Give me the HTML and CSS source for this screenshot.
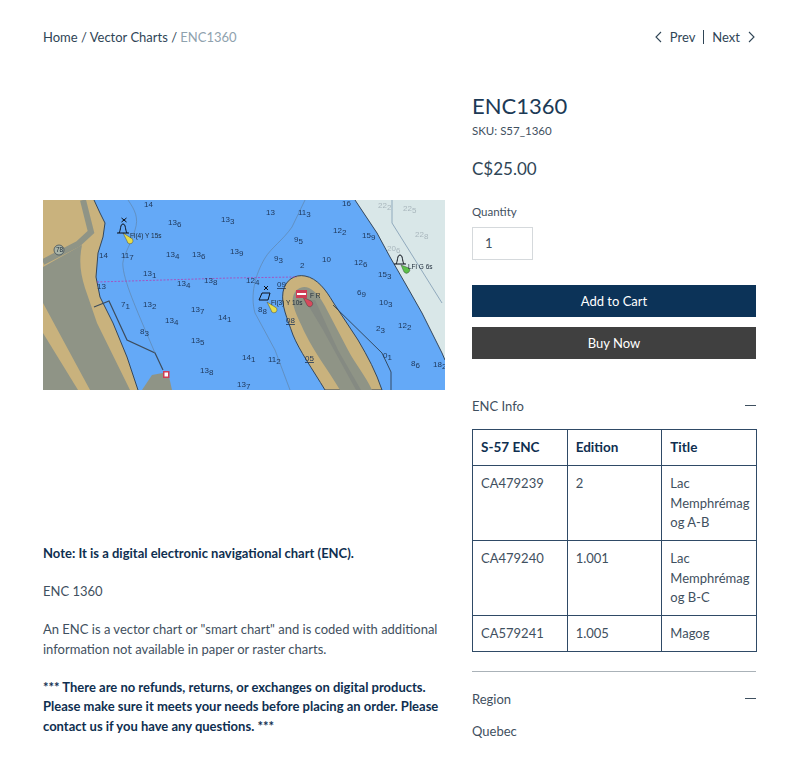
FILE: index.html
```html
<!DOCTYPE html>
<html lang="en">
<head>
    <meta charset="UTF-8">
    <meta name="viewport" content="width=device-width, initial-scale=1.0">
    <title>ENC1360</title>
    <link rel="stylesheet" href="styles.css">
</head>
<body>
    <div class="product">
        <div class="product__top">
            <div class="crumbs">Home / Vector Charts / <span class="crumbs__current">ENC1360</span></div>
            <div class="pager">
                <svg class="pager__icon" viewBox="0 0 8 12"><path d="M7 1 2 6l5 5"/></svg>
                <span>Prev</span>
                <span class="pager__sep"></span>
                <span>Next</span>
                <svg class="pager__icon" viewBox="0 0 8 12"><path d="m1 1 5 5-5 5"/></svg>
            </div>
        </div>

        <div class="product__main">
            <div class="product__left">
                <div class="gallery">
                    <svg class="chart" viewBox="0 0 402 190">
                        <rect class="chart__water" width="402" height="190"/>
                        <path class="chart__light" d="M312 0 334 33 347 57 362 83 379 113 399 153 402 160V0Z"/>
                        <path class="chart__land" d="M0 0H51L57 13 62 23 60 37 55 53 53 77 57 97 70 123 84 157 95 190H0Z"/>
                        <path class="chart__grey" d="M0 67 39 45C36 60 37 72 42 88L54 123 87 190H47L0 103Z"/>
                        <path class="chart__grey" d="M0 133 35 190H0Z"/>
                        <path class="chart__road" d="M0 62 35 44 48 32 40 0"/>
                        <path class="chart__coast" d="M51 0 57 13 62 23 60 37 55 53 53 77 57 97 70 123 84 157 95 190"/>
                        <path class="chart__grey" d="M99 190 109 175 125 172 129 190Z"/>
                        <path class="chart__pier" d="M51 107 66 101 84 140 112 153 120 170"/>
                        <path class="chart__land chart__coast" d="M282 190C270 170 256 150 250 135 244 118 238 105 240 92 242 80 252 74 262 76 274 78 283 90 290 102L315 140C325 157 333 172 339 190Z"/>
                        <path class="chart__grey" d="M297 190C285 170 270 150 263 135 256 120 248 105 250 97 252 88 260 85 266 88 274 92 279 100 284 110L305 150C313 165 322 175 329 190Z"/>
                        <path class="chart__greydark" d="M313 190 280 130 262 100 272 100 295 150 318 190Z"/>
                        <path class="chart__coast" d="M312 0 334 33 347 57 362 83 379 113 399 153 402 160"/>
                        <path class="chart__contour" d="M85 0C92 10 96 18 92 30 88 45 78 58 80 67 82 85 96 115 112 153"/>
                        <path class="chart__contour" d="M262 0 249 27C240 40 228 48 222 58 212 75 207 95 212 113L232 150 247 190"/>
                        <path class="chart__contour chart__contour_dark" d="M290 105 339 153 348 172V190"/>
                        <path class="chart__contour" d="M349 0 349 23 399 103"/>
                        <path class="chart__route" d="M54 82 187 78 254 77"/>

                        <circle class="chart__spot" cx="16" cy="50" r="5"/>
                        <path class="chart__buoy chart__buoy_yellow" d="M80 33 88 38A3 3 0 1 1 84 41Z"/>
                        <path class="chart__mark" d="M74 33H86M76 33C78 30 77 24 80 24 83 24 82 30 84 33M78.5 18l5 4m0-4-5 4"/>
                        <path class="chart__buoy chart__buoy_green" d="M358 65 366 68A3.2 3.2 0 1 1 361 72Z"/>
                        <path class="chart__mark" d="M351 64H363M353 64C355 61 354 55 357 55 360 55 359 61 361 64"/>
                        <path class="chart__buoy chart__buoy_yellow" d="M224 102 232 107A3 3 0 1 1 228 110Z"/>
                        <path class="chart__mark" d="M216 100 219 93H227L225 100ZM221 86l4 4m0-4-4 4"/>
                        <path class="chart__buoy chart__buoy_red" d="M260 97 268 101A3 3 0 1 1 264 105Z"/>
                        <rect class="chart__red" x="253" y="90" width="11" height="8"/>
                        <rect class="chart__white" x="254" y="93" width="9" height="2"/>
                        <rect class="chart__red" x="120" y="171" width="6.5" height="7"/>
                        <rect class="chart__white" x="121.5" y="172.5" width="3.5" height="4"/>

                        <text class="chart__label" x="87" y="38">Fl(4) Y 15s</text>
                        <text class="chart__label" x="365" y="69">LFl G 6s</text>
                        <text class="chart__label" x="228" y="105">Fl(3) Y 10s</text>
                        <text class="chart__label" x="267" y="98">F R</text>
                        <text class="chart__label" x="13" y="52">78</text>

                        <text class="chart__depth" x="101" y="7">14</text>
                        <text class="chart__depth" x="125" y="25">13<tspan dy="2">6</tspan></text>
                        <text class="chart__depth" x="178" y="22">13<tspan dy="2">3</tspan></text>
                        <text class="chart__depth" x="56" y="58">14</text>
                        <text class="chart__depth" x="78" y="58">11<tspan dy="2">7</tspan></text>
                        <text class="chart__depth" x="123" y="57">13<tspan dy="2">4</tspan></text>
                        <text class="chart__depth" x="149" y="57">13<tspan dy="2">6</tspan></text>
                        <text class="chart__depth" x="100" y="76">13<tspan dy="2">1</tspan></text>
                        <text class="chart__depth" x="134" y="86">13<tspan dy="2">4</tspan></text>
                        <text class="chart__depth" x="161" y="83">13<tspan dy="2">8</tspan></text>
                        <text class="chart__depth" x="54" y="89">13</text>
                        <text class="chart__depth" x="78" y="107">7<tspan dy="2">1</tspan></text>
                        <text class="chart__depth" x="100" y="107">13<tspan dy="2">2</tspan></text>
                        <text class="chart__depth" x="148" y="112">13<tspan dy="2">7</tspan></text>
                        <text class="chart__depth" x="175" y="120">14<tspan dy="2">1</tspan></text>
                        <text class="chart__depth" x="122" y="123">13<tspan dy="2">4</tspan></text>
                        <text class="chart__depth" x="97" y="134">8<tspan dy="2">3</tspan></text>
                        <text class="chart__depth" x="148" y="143">13<tspan dy="2">5</tspan></text>
                        <text class="chart__depth" x="157" y="173">13<tspan dy="2">8</tspan></text>
                        <text class="chart__depth" x="223" y="15">13</text>
                        <text class="chart__depth" x="255" y="15">11<tspan dy="2">3</tspan></text>
                        <text class="chart__depth" x="299" y="6">16</text>
                        <text class="chart__depth" x="290" y="33">12<tspan dy="2">2</tspan></text>
                        <text class="chart__depth" x="319" y="38">15<tspan dy="2">9</tspan></text>
                        <text class="chart__depth" x="251" y="42">9<tspan dy="2">5</tspan></text>
                        <text class="chart__depth" x="187" y="54">13<tspan dy="2">9</tspan></text>
                        <text class="chart__depth" x="231" y="61">9<tspan dy="2">3</tspan></text>
                        <text class="chart__depth" x="257" y="68">2</text>
                        <text class="chart__depth" x="279" y="62">10</text>
                        <text class="chart__depth" x="311" y="65">12<tspan dy="2">6</tspan></text>
                        <text class="chart__depth" x="335" y="77">15<tspan dy="2">3</tspan></text>
                        <text class="chart__depth" x="203" y="83">12<tspan dy="2">4</tspan></text>
                        <text class="chart__depth" x="314" y="95">6<tspan dy="2">9</tspan></text>
                        <text class="chart__depth" x="336" y="105">10<tspan dy="2">3</tspan></text>
                        <text class="chart__depth" x="215" y="112">8<tspan dy="2">8</tspan></text>
                        <text class="chart__depth" x="333" y="131">2<tspan dy="2">3</tspan></text>
                        <text class="chart__depth" x="355" y="128">12<tspan dy="2">2</tspan></text>
                        <text class="chart__depth" x="340" y="158">0<tspan dy="2">1</tspan></text>
                        <text class="chart__depth" x="368" y="166">8<tspan dy="2">6</tspan></text>
                        <text class="chart__depth" x="390" y="167">18<tspan dy="2">2</tspan></text>
                        <text class="chart__depth" x="199" y="160">14<tspan dy="2">1</tspan></text>
                        <text class="chart__depth" x="225" y="162">11<tspan dy="2">2</tspan></text>
                        <text class="chart__depth" x="194" y="187">13<tspan dy="2">7</tspan></text>
                        <text class="chart__depth chart__depth_under" x="234" y="87">09</text>
                        <text class="chart__depth chart__depth_under" x="243" y="123">08</text>
                        <text class="chart__depth chart__depth_under" x="262" y="161">05</text>
                        <text class="chart__depth chart__depth_light" x="335" y="8">22<tspan dy="2">2</tspan></text>
                        <text class="chart__depth chart__depth_light" x="360" y="11">22<tspan dy="2">5</tspan></text>
                        <text class="chart__depth chart__depth_light" x="372" y="37">22<tspan dy="2">8</tspan></text>
                        <text class="chart__depth chart__depth_light" x="344" y="51">20<tspan dy="2">6</tspan></text>
                    </svg>
                </div>

                <div class="description">
                    <p class="description__strong">Note: It is a digital electronic navigational chart (ENC).</p>
                    <p>ENC 1360</p>
                    <p>An ENC is a vector chart or "smart chart" and is coded with additional information not available in paper or raster charts.</p>
                    <p class="description__strong">*** There are no refunds, returns, or exchanges on digital products. Please make sure it meets your needs before placing an order. Please contact us if you have any questions. ***</p>
                </div>
            </div>

            <div class="product__right">
                <h1 class="product__title">ENC1360</h1>
                <div class="product__sku">SKU: S57_1360</div>
                <div class="product__price">C$25.00</div>

                <div class="product__label">Quantity</div>
                <div class="quantity">1</div>

                <div class="btn btn_cart">Add to Cart</div>
                <div class="btn btn_buy">Buy Now</div>

                <div class="section section_info">
                    <span>ENC Info</span>
                    <span class="section__minus"></span>
                </div>

                <table class="info">
                    <tr>
                        <th>S-57 ENC</th>
                        <th>Edition</th>
                        <th>Title</th>
                    </tr>
                    <tr>
                        <td>CA479239</td>
                        <td>2</td>
                        <td>Lac<br>Memphrémag<br>og A-B</td>
                    </tr>
                    <tr>
                        <td>CA479240</td>
                        <td>1.001</td>
                        <td>Lac<br>Memphrémag<br>og B-C</td>
                    </tr>
                    <tr>
                        <td>CA579241</td>
                        <td>1.005</td>
                        <td>Magog</td>
                    </tr>
                </table>

                <div class="divider"></div>

                <div class="section section_region">
                    <span>Region</span>
                    <span class="section__minus"></span>
                </div>
                <div class="region">Quebec</div>
            </div>
        </div>
    </div>
</body>
</html>
```

FILE: styles.css
```css
* {box-sizing: border-box;}
html, body {margin: 0; background: #fff;}
body {font-family: "Lato", "Liberation Sans", sans-serif; font-size: 13px; color: #3f5060; font-weight: 400;}

.product {height: 770px; overflow: hidden; padding: 28px 44px 0 43px;}
.product__top {display: flex; justify-content: space-between; align-items: center; height: 18px;}
.crumbs {color: #2f4556;}
.crumbs__current {color: #8fa2ae;}
.pager {display: flex; align-items: center; gap: 8px; color: #2f4556;}
.pager__icon {width: 8px; height: 12px; fill: none; stroke: #2f4556; stroke-width: 1.1;}
.pager__sep {width: 1px; height: 14px; background: #2f4556;}

.product__main {display: flex; gap: 27px; margin-top: 46px;}
.product__left {width: 402px; flex: none;}
.product__right {width: 284px; flex: none;}

.gallery {height: 402px; margin-top: 2px; display: flex; align-items: center;}
.chart {display: block; width: 402px; height: 190px; filter: blur(0.3px);}
.chart__water {fill: #64a9f7;}
.chart__light {fill: #d9e7e8;}
.chart__land {fill: #c9b27d;}
.chart__grey {fill: #8f9486;}
.chart__greydark {fill: #858a82;}
.chart__road {fill: none; stroke: #8f9486; stroke-width: 6;}
.chart__coast {stroke: #34475c; stroke-width: 1;}
path.chart__coast:not(.chart__land) {fill: none;}
.chart__pier {fill: none; stroke: #3d4c5c; stroke-width: 1.2;}
.chart__contour {fill: none; stroke: #5f7f9f; stroke-width: 0.6;}
.chart__contour_dark {stroke: #2f4050; stroke-width: 0.9;}
.chart__route {fill: none; stroke: #b13fb6; stroke-width: 0.8; stroke-dasharray: 2 1.5;}
.chart__spot {fill: #a9b4a8; stroke: #33424f; stroke-width: 0.7;}
.chart__mark {fill: none; stroke: #0b0f18; stroke-width: 1;}
.chart__buoy {stroke: #333; stroke-width: 0.4;}
.chart__buoy_yellow {fill: #e6dc4a;}
.chart__buoy_green {fill: #5cc04a;}
.chart__buoy_red {fill: #d8495c;}
.chart__red {fill: #cf3c55;}
.chart__white {fill: #fff;}
.chart__label {font-family: "Liberation Sans", sans-serif; font-size: 6.5px; fill: #1d2a38;}
.chart__depth {font-family: "Liberation Sans", sans-serif; font-size: 8px; fill: #1e3658;}
.chart__depth_under {text-decoration: underline;}
.chart__depth_light {fill: #a9b7bd;}

.description {margin-top: 48px; line-height: 19.5px;}
.description p {margin: 0 0 18.5px;}
.description__strong {color: #0f2f50; font-weight: 700;}

.product__title {margin: 0; font-size: 22px; font-weight: 400; line-height: 28px; color: #1c3a56;}
.product__sku {font-size: 11.5px; line-height: 16px; margin-top: 3px;}
.product__price {font-size: 17px; line-height: 24px; margin-top: 18px; color: #2f4556;}
.product__label {font-size: 11.5px; line-height: 16px; margin-top: 23px;}
.quantity {width: 61px; height: 33px; margin-top: 7px; padding-left: 12px; line-height: 31px; border: 1px solid #d5d9dc;}

.btn {height: 32px; line-height: 32px; text-align: center; color: #fff;}
.btn_cart {margin-top: 25px; background: #0c3358;}
.btn_buy {margin-top: 10px; background: #404040;}

.section {display: flex; justify-content: space-between; align-items: center; height: 20px;}
.section_info {margin-top: 37px;}
.section_region {margin-top: 17px;}
.section__minus {width: 11px; height: 1px; background: #3f5060; margin-top: -2px;}

.info {width: 285px; margin-top: 13px; border-collapse: collapse; table-layout: fixed; line-height: 19.5px;}
.info th, .info td {border: 1px solid #2f4a66; padding: 8px 8px 7.5px; text-align: left; vertical-align: top;}
.info th {color: #0f2f50; font-weight: 700; font-size: 13.5px;}

.divider {height: 1px; margin-top: 19px; background: #aab2b8;}
.region {margin-top: 14px;}
```
